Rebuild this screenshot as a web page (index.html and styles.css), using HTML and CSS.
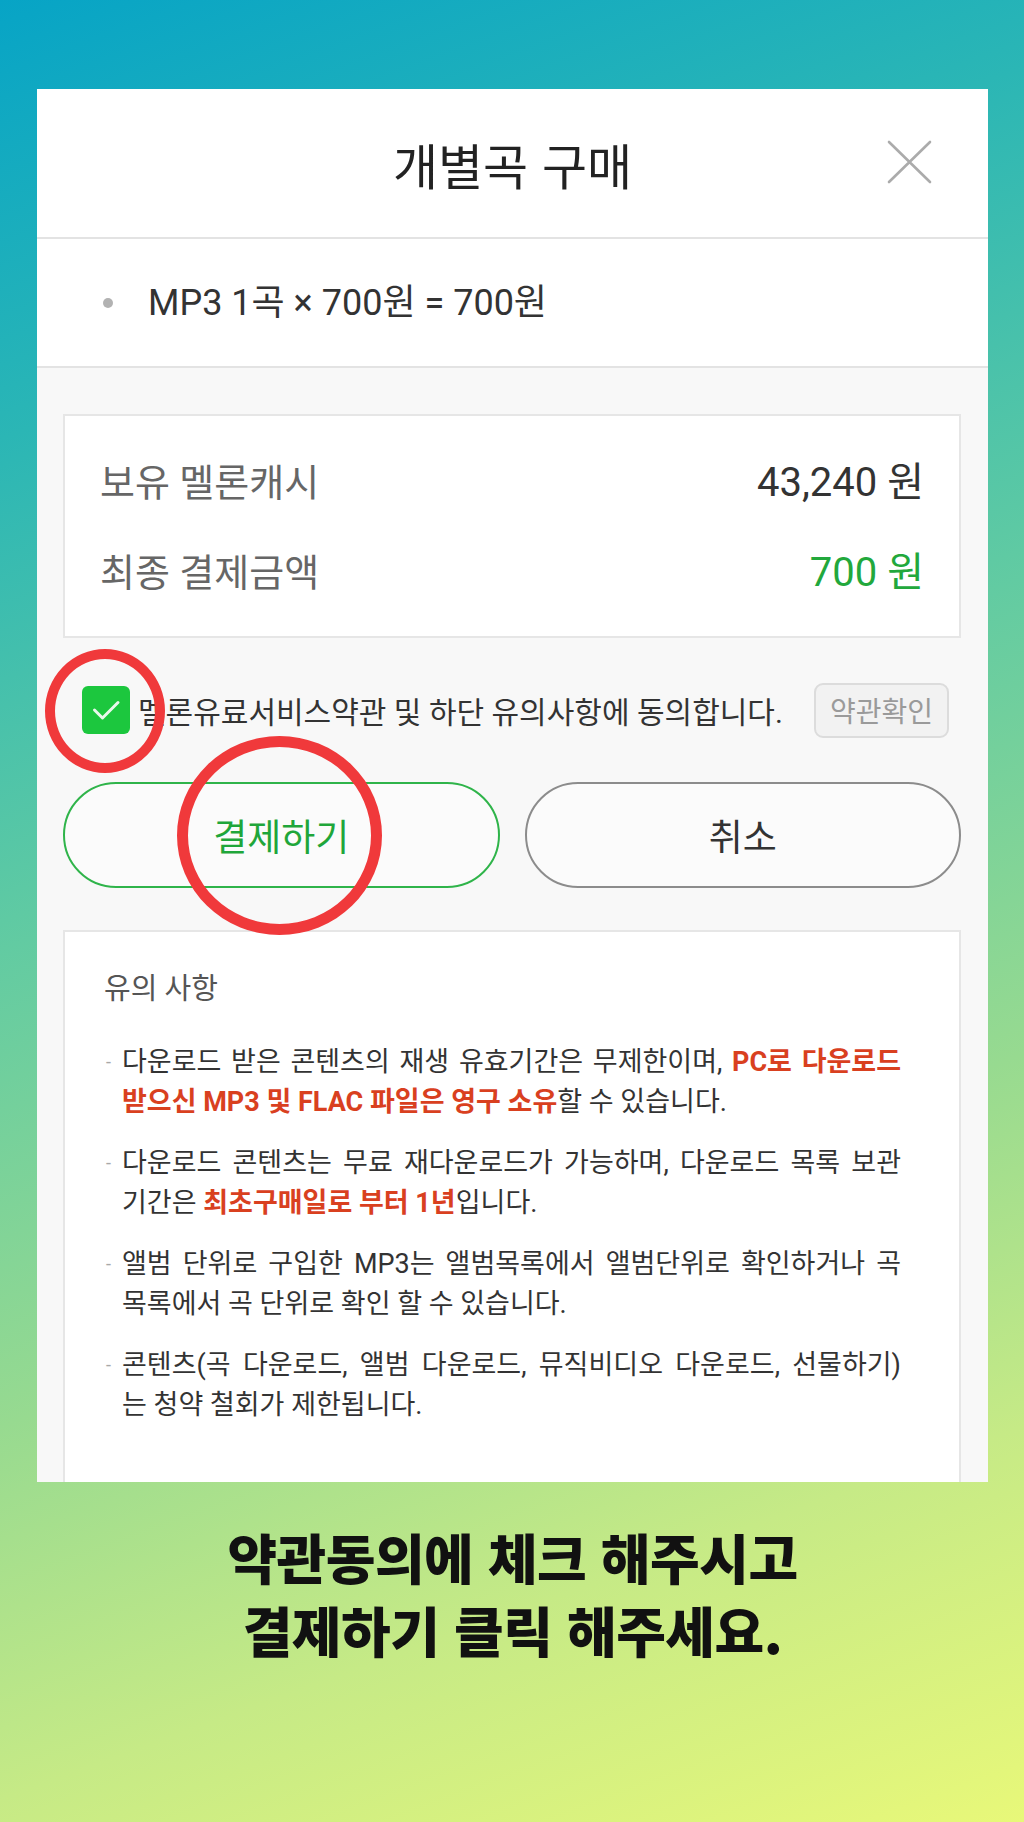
FILE: index.html
```html
<!DOCTYPE html>
<html lang="ko">
<head>
<meta charset="utf-8">
<title>개별곡 구매</title>
<link rel="stylesheet" href="styles.css">
</head>
<body>
<div class="page">
  <div class="panel">
    <div class="header">
      <h1 class="title">개별곡 구매</h1>
      <svg class="close" viewBox="0 0 45 44" aria-hidden="true"><path d="M2 2 L43 42 M43 2 L2 42" stroke="#ababab" stroke-width="2.6" stroke-linecap="round" fill="none"/></svg>
    </div>
    <div class="item"><span class="dot"></span><span class="item-text">MP3 1곡 × 700원 = 700원</span></div>
    <div class="body">
      <div class="summary">
        <div class="row"><span class="label">보유 멜론캐시</span><span class="val">43,240 원</span></div>
        <div class="row"><span class="label">최종 결제금액</span><span class="val green">700 원</span></div>
      </div>
      <div class="agree">
        <span class="check"><svg viewBox="0 0 48 48" aria-hidden="true"><polyline points="12.5,24 20.5,32 36,16.5" stroke="#e9f8ec" stroke-width="3" stroke-linecap="round" stroke-linejoin="round" fill="none"/></svg></span>
        <span class="agree-text">멜론유료서비스약관 및 하단 유의사항에 동의합니다.</span>
        <span class="terms">약관확인</span>
      </div>
      <div class="actions">
        <button class="btn pay">결제하기</button>
        <button class="btn cancel">취소</button>
      </div>
      <div class="notice">
        <h2 class="notice-title">유의 사항</h2>
        <ul class="notice-list">
          <li><span class="mark">-</span><p class="txt"><span class="ln j">다운로드 받은 콘텐츠의 재생 유효기간은 무제한이며, <b>PC로 다운로드</b></span><span class="ln"><b>받으신 MP3 및 FLAC 파일은 영구 소유</b>할 수 있습니다.</span></p></li>
          <li><span class="mark">-</span><p class="txt"><span class="ln j">다운로드 콘텐츠는 무료 재다운로드가 가능하며, 다운로드 목록 보관</span><span class="ln">기간은 <b>최초구매일로 부터 1년</b>입니다.</span></p></li>
          <li><span class="mark">-</span><p class="txt"><span class="ln j">앨범 단위로 구입한 MP3는 앨범목록에서 앨범단위로 확인하거나 곡</span><span class="ln">목록에서 곡 단위로 확인 할 수 있습니다.</span></p></li>
          <li><span class="mark">-</span><p class="txt"><span class="ln j">콘텐츠(곡 다운로드, 앨범 다운로드, 뮤직비디오 다운로드, 선물하기)</span><span class="ln">는 청약 철회가 제한됩니다.</span></p></li>
        </ul>
      </div>
    </div>
    <span class="ring ring-check"></span>
    <span class="ring ring-pay"></span>
  </div>
  <p class="caption">약관동의에 체크 해주시고<br>결제하기 클릭 해주세요.</p>
</div>
</body>
</html>
```

FILE: styles.css
```css
* { box-sizing: border-box; }

body {
  margin: 0;
  width: 1024px;
  height: 1822px;
  overflow: hidden;
  background: linear-gradient(160deg, #07a4c6 0%, #2bb6b5 20%, #5fcaa3 42%, #97da90 65%, #c6ea86 82%, #e8f879 100%);
  font-family: Roboto, "Noto Sans CJK KR", sans-serif;
}

.page {
  padding: 89px 36px 0 37px;
}

.panel {
  position: relative;
  height: 1393px;
  background: #f8f8f8;
  overflow: hidden;
}

.header {
  position: relative;
  height: 150px;
  background: #fff;
  border-bottom: 2px solid #e3e3e3;
  display: flex;
  align-items: center;
  justify-content: center;
}

.title {
  margin: 0;
  font-family: "Noto Sans CJK KR", sans-serif;
  font-weight: 400;
  font-size: 49px;
  line-height: 1;
  color: #222;
}

.close {
  position: absolute;
  left: 850px;
  top: 51px;
  width: 45px;
  height: 44px;
}

.item {
  height: 129px;
  background: #fff;
  border-bottom: 2px solid #e3e3e3;
  display: flex;
  align-items: center;
  padding-left: 66px;
}

.dot {
  width: 10px;
  height: 10px;
  border-radius: 50%;
  background: #b2b2b2;
  margin-right: 35px;
}

.item-text {
  font-size: 36px;
  line-height: 1;
  color: #333;
}

.body {
  padding: 46px 27px 0 26px;
}

.summary {
  height: 224px;
  background: #fff;
  border: 2px solid #e6e6e6;
  padding: 0 35px 4px;
  display: flex;
  flex-direction: column;
  justify-content: center;
}

.row {
  height: 90px;
  display: flex;
  align-items: center;
  justify-content: space-between;
}

.label {
  font-size: 38px;
  color: #666;
}

.val {
  font-size: 40px;
  color: #333;
}

.green { color: #22a83c; }

.agree {
  height: 144px;
  display: flex;
  align-items: center;
}

.check {
  width: 48px;
  height: 48px;
  flex: none;
  border-radius: 6px;
  background: #1cc73e;
  margin-left: 19px;
  display: flex;
}

.check svg { width: 48px; height: 48px; }

.agree-text {
  flex: 1;
  margin-left: 8px;
  font-size: 30px;
  color: #333;
  white-space: nowrap;
}

.terms {
  width: 135px;
  height: 55px;
  flex: none;
  margin-right: 12px;
  border: 2px solid #dcdcdc;
  border-radius: 9px;
  background: #f2f2f2;
  color: #9a9a9a;
  font-size: 28px;
  display: flex;
  align-items: center;
  justify-content: center;
}

.actions {
  display: flex;
  gap: 25px;
  height: 106px;
}

.btn {
  flex: 1;
  border-radius: 53px;
  background: #fbfbfb;
  font-family: "Noto Sans CJK KR", sans-serif;
  font-size: 37px;
  padding: 0;
}

.pay {
  border: 2px solid #2fb44a;
  color: #1fa63a;
}

.cancel {
  border: 2px solid #8c8c8c;
  color: #333;
}

.notice {
  margin-top: 42px;
  height: 620px;
  background: #fff;
  border: 2px solid #e6e6e6;
  border-bottom: none;
  padding: 37px 58px 0 39px;
}

.notice-title {
  margin: 0;
  font-size: 29px;
  font-weight: 400;
  line-height: 40px;
  color: #555;
}

.notice-list {
  list-style: none;
  margin: 33px 0 0;
  padding: 0;
}

.notice-list li {
  display: flex;
  margin-bottom: 21px;
  font-size: 27px;
  line-height: 40px;
  color: #333;
}

.mark {
  width: 18px;
  flex: none;
  color: #a8a8a8;
  font-size: 18px;
  padding-left: 2px;
}

.txt {
  margin: 0;
  flex: 1;
}

.ln {
  display: block;
  white-space: nowrap;
}

.j {
  text-align: justify;
  text-align-last: justify;
}

.txt b {
  color: #d9401f;
  font-weight: 700;
}

.ring {
  position: absolute;
  border-radius: 50%;
  border: 10px solid #f0393b;
  pointer-events: none;
}

.ring-check {
  left: 8px;
  top: 560px;
  width: 120px;
  height: 124px;
}

.ring-pay {
  left: 140px;
  top: 647px;
  width: 205px;
  height: 199px;
  border-width: 11px;
}

.caption {
  margin: 38px 0 0;
  text-align: center;
  font-family: "Noto Sans CJK KR", sans-serif;
  font-size: 54px;
  font-weight: 900;
  line-height: 73px;
  letter-spacing: -0.5px;
  color: #111;
}
```
